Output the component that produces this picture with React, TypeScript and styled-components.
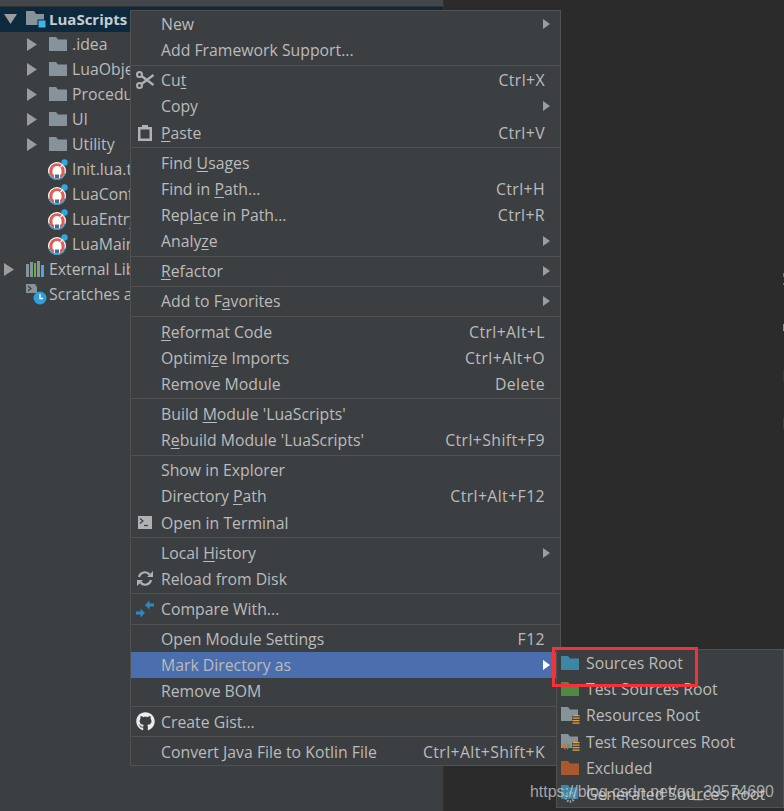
import React from "react"
import styled, { createGlobalStyle } from "styled-components"
import { FaGithub } from "react-icons/fa"

const GlobalStyle = createGlobalStyle`
    html, body {
        margin: 0;
        padding: 0;
        background: #2b2b2b;
    }
`

const Page = styled.div`
    position: relative;
    display: flex;
    width: 784px;
    height: 811px;
    overflow: hidden;
    font-family: "Open Sans", "Noto Sans", sans-serif;
    font-size: 15.8px;
    color: #bbbbbb;
`

const ProjectPanel = styled.div`
    width: 444px;
    background: #3c3f41;
    border-right: 1px solid #323232;
    box-sizing: border-box;
`

const PanelHeader = styled.div`
    height: 6px;
    background: #43464a;
    border-bottom: 1px solid #333333;
`

const Editor = styled.div`
    flex-grow: 1;
    background: #2b2b2b;
`

const TreeRow = styled.div<{ $indent: number; $selected?: boolean }>`
    display: flex;
    align-items: center;
    height: ${(p) => (p.$selected ? 24.5 : 25.05)}px;
    padding-left: ${(p) => p.$indent}px;
    white-space: nowrap;
    background: ${(p) => (p.$selected ? "#0d293e" : "transparent")};
    font-weight: ${(p) => (p.$selected ? 700 : 400)};
    font-size: ${(p) => (p.$selected ? 15 : 15.8)}px;
    color: ${(p) => (p.$selected ? "#c6ccd0" : "#bbbbbb")};
`

const Twisty = styled.span`
    display: flex;
    width: 22px;
    flex-shrink: 0;
`

const TreeIcon = styled.span<{ $width?: number }>`
    display: flex;
    width: ${(p) => p.$width ?? 23}px;
    flex-shrink: 0;
`

const Menu = styled.div<{ $left: number; $top: number; $width: number }>`
    position: absolute;
    left: ${(p) => p.$left}px;
    top: ${(p) => p.$top}px;
    width: ${(p) => p.$width}px;
    box-sizing: border-box;
    background: #3c3f41;
    border: 1px solid #515151;
`

const Row = styled.div<{ $active?: boolean }>`
    display: flex;
    align-items: center;
    height: 26.15px;
    padding: 0 10px 0 4px;
    white-space: nowrap;
    background: ${(p) => (p.$active ? "#4b6eaf" : "transparent")};
`

const RowIcon = styled.span`
    display: flex;
    justify-content: center;
    width: 20px;
    margin-right: 6px;
    flex-shrink: 0;
`

const Label = styled.span`
    flex-grow: 1;
    u {
        text-underline-offset: 2px;
    }
`

const Shortcut = styled.span`
    margin-right: 5px;
    letter-spacing: 0.4px;
`

const Arrow = styled.span<{ $active?: boolean }>`
    width: 0;
    height: 0;
    border-left: 7px solid ${(p) => (p.$active ? "#ffffff" : "#9a9c9e")};
    border-top: 5px solid transparent;
    border-bottom: 5px solid transparent;
`

const Separator = styled.div`
    height: 4px;
    display: flex;
    align-items: center;
    &::before {
        content: "";
        flex-grow: 1;
        height: 1px;
        background: #515151;
    }
`

const SubRow = styled.div`
    display: flex;
    align-items: center;
    height: 26.2px;
    padding-left: 4px;
    white-space: nowrap;
`

const SubIcon = styled.span`
    display: flex;
    width: 25px;
    flex-shrink: 0;
`

const RedBox = styled.div`
    position: absolute;
    left: 552px;
    top: 647px;
    width: 146px;
    height: 40px;
    box-sizing: border-box;
    border: 3px solid #f53238;
`

const Watermark = styled.div`
    position: absolute;
    left: 530px;
    top: 781px;
    font-family: "Liberation Sans", Arial, sans-serif;
    font-size: 15.9px;
    line-height: 22px;
    white-space: nowrap;
    color: rgba(214, 214, 214, 0.72);
`

// clipped editor text peeking in at the right window edge
const EdgeMark = styled.div<{ $top: number; $height: number; $color: string }>`
    position: absolute;
    right: 0;
    top: ${(p) => p.$top}px;
    width: 1px;
    height: ${(p) => p.$height}px;
    background: ${(p) => p.$color};
`

const Folder = ({ color = "#87939a" }: { color?: string }) => (
    <svg width="18" height="14" viewBox="0 0 18 14">
        <path d="M0 0h7l2 2.5h9V14H0z" fill={color} />
    </svg>
)

const RootFolder = () => (
    <svg width="20" height="18" viewBox="0 0 20 18">
        <path d="M0 1h8l2 3h8v11H0z" fill="#87939a" />
        <rect x="12" y="10" width="8" height="8" fill="#3fb4e8" stroke="#0d293e" strokeWidth="1" />
    </svg>
)

const LuaIcon = () => (
    <svg width="21" height="21" viewBox="0 0 21 21">
        <circle cx="9" cy="12" r="9" fill="#fff" />
        <circle cx="9" cy="12" r="7.8" fill="#e05c55" />
        <path d="M1 14.5a8.4 8.4 0 0 0 16 0" fill="none" stroke="#2b8fc6" strokeWidth="1.2" />
        <path d="M4.5 11.5a4.5 4.5 0 0 1 9 0v3L12 16v3H6v-3l-1.5-1.5z" fill="#fff" />
        <path d="M7 19v-3.5h4V19" fill="#3c6f96" />
        <circle cx="16.5" cy="3.5" r="3.2" fill="#2fa8dc" />
        <path d="M15 5.5l-2.5 2.5" stroke="#fff" strokeWidth="1.2" />
    </svg>
)

const Libraries = () => (
    <svg width="18" height="16" viewBox="0 0 18 16">
        <rect x="0" y="3" width="3" height="13" fill="#87939a" />
        <rect x="4" y="1" width="3" height="15" fill="#87939a" />
        <rect x="8" y="2" width="2" height="14" fill="#62b543" />
        <rect x="11" y="0" width="3" height="16" fill="#87939a" />
        <rect x="15" y="4" width="3" height="12" fill="#4ea6d8" />
    </svg>
)

const Scratches = () => (
    <svg width="21" height="21" viewBox="0 0 21 21">
        <path d="M0 0h9l2 3v6H0z" fill="#87939a" />
        <path d="M2 2l3 2.5L2 7" fill="none" stroke="#3c3f41" strokeWidth="1.2" />
        <circle cx="14" cy="14" r="6.5" fill="#2d9fdc" />
        <path d="M14 10v4.5h3" fill="none" stroke="#fff" strokeWidth="1.3" />
    </svg>
)

const ScissorsIcon = () => (
    <svg width="19" height="18" viewBox="0 0 19 18">
        <circle cx="3.5" cy="3.5" r="2.5" fill="none" stroke="#afb1b3" strokeWidth="2" />
        <circle cx="3.5" cy="14.5" r="2.5" fill="none" stroke="#afb1b3" strokeWidth="2" />
        <path d="M5.5 5l12 9M5.5 13L17.5 4" stroke="#afb1b3" strokeWidth="2.2" />
    </svg>
)

const ClipboardIcon = () => (
    <svg width="14" height="16" viewBox="0 0 14 16">
        <path d="M0 2h4V0h6v2h4v14H0z" fill="#afb1b3" />
        <rect x="2.5" y="4.5" width="9" height="9" fill="#3c3f41" />
    </svg>
)

const TerminalIcon = () => (
    <svg width="14" height="13" viewBox="0 0 14 13">
        <rect width="14" height="13" fill="#afb1b3" />
        <path d="M2 2.5l3 2.5-3 2.5" fill="none" stroke="#3c3f41" strokeWidth="1.2" />
        <path d="M6 9.5h4" stroke="#3c3f41" strokeWidth="1.2" />
    </svg>
)

const ReloadIcon = () => (
    <svg width="16" height="15" viewBox="0 0 16 15">
        <path d="M2 6a6 6 0 0 1 10.5-2.5" fill="none" stroke="#afb1b3" strokeWidth="2.2" />
        <path d="M14 9a6 6 0 0 1-10.5 2.5" fill="none" stroke="#afb1b3" strokeWidth="2.2" />
        <path d="M10 6h6V0zM6 9H0v6z" fill="#afb1b3" />
    </svg>
)

const CompareIcon = () => (
    <svg width="18" height="18" viewBox="0 0 18 18">
        <path d="M0 11.5h4.5V8.5L9 13l-4.5 4.5v-3H0z" fill="#2f87bd" />
        <path d="M18 6.5h-4.5v3L9 5l4.5-4.5v3H18z" fill="#2f87bd" />
    </svg>
)

const ResourceLines = ({ x, y }: { x: number; y: number }) => (
    <path
        d={`M${x} ${y}h7v1.2h-7zM${x} ${y + 2.5}h7v1.2h-7zM${x} ${y + 5}h7v1.2h-7zM${x} ${y + 7.5}h7v1.2h-7z`}
        fill="#e0a43c"
    />
)

const ResourcesIcon = ({ test }: { test?: boolean }) => (
    <svg width="19" height="18" viewBox="0 0 19 18">
        <path d="M0 1h7l2 2.5h8V9h-6v6H0z" fill="#87939a" />
        <ResourceLines x={11.5} y={9} />
        {test && <path d="M1 13l3.5-3.5V17z" fill="#e8622a" />}
        {test && <path d="M9.5 13L6 9.5V17z" fill="#4fa83f" />}
    </svg>
)

const GeneratedIcon = () => (
    <svg width="19" height="18" viewBox="0 0 19 18">
        <path d="M0 0h7l2 2.5h8V14H0z" fill="#3b87a5" />
        <circle cx="9" cy="12" r="4.5" fill="none" stroke="#9aa0a4" strokeWidth="2.4" strokeDasharray="1.6 1.2" />
    </svg>
)

type Item =
    | "sep"
    | { label: string; shortcut?: string; submenu?: boolean; icon?: React.ReactNode; active?: boolean }

// "_" marks the mnemonic letter
const items: Item[] = [
    { label: "New", submenu: true },
    { label: "Add Framework Support..." },
    "sep",
    { label: "Cu_t", shortcut: "Ctrl+X", icon: <ScissorsIcon /> },
    { label: "Copy", submenu: true },
    { label: "_Paste", shortcut: "Ctrl+V", icon: <ClipboardIcon /> },
    "sep",
    { label: "Find _Usages" },
    { label: "Find in _Path...", shortcut: "Ctrl+H" },
    { label: "Repl_ace in Path...", shortcut: "Ctrl+R" },
    { label: "Analy_ze", submenu: true },
    "sep",
    { label: "_Refactor", submenu: true },
    "sep",
    { label: "Add to F_avorites", submenu: true },
    "sep",
    { label: "_Reformat Code", shortcut: "Ctrl+Alt+L" },
    { label: "Optimi_ze Imports", shortcut: "Ctrl+Alt+O" },
    { label: "Remove Module", shortcut: "Delete" },
    "sep",
    { label: "Build _Module 'LuaScripts'" },
    { label: "R_ebuild Module 'LuaScripts'", shortcut: "Ctrl+Shift+F9" },
    "sep",
    { label: "Show in Explorer" },
    { label: "Directory _Path", shortcut: "Ctrl+Alt+F12" },
    { label: "Open in Terminal", icon: <TerminalIcon /> },
    "sep",
    { label: "Local _History", submenu: true },
    { label: "Reload from Disk", icon: <ReloadIcon /> },
    "sep",
    { label: "Compare With...", icon: <CompareIcon /> },
    "sep",
    { label: "Open Module Settings", shortcut: "F12" },
    { label: "Mark Directory as", submenu: true, active: true },
    { label: "Remove BOM" },
    "sep",
    { label: "Create Gist...", icon: <FaGithub size={19} color="#ececec" /> },
    "sep",
    { label: "Convert Java File to Kotlin File", shortcut: "Ctrl+Alt+Shift+K" },
]

const subItems = [
    { label: "Sources Root", icon: <Folder color="#3b87a5" /> },
    { label: "Test Sources Root", icon: <Folder color="#4f8a45" /> },
    { label: "Resources Root", icon: <ResourcesIcon /> },
    { label: "Test Resources Root", icon: <ResourcesIcon test /> },
    { label: "Excluded", icon: <Folder color="#a9572c" /> },
    { label: "Generated Sources Root", icon: <GeneratedIcon /> },
]

const edgeMarks = [
    { top: 273, height: 4, color: "#5b7a90" },
    { top: 283, height: 2, color: "#5b7a90" },
    { top: 324, height: 7, color: "#7d9ab0" },
    { top: 370, height: 12, color: "#2f3550" },
    { top: 418, height: 11, color: "#2f3f60" },
]

const folders = [".idea", "LuaObjects", "Procedure", "UI", "Utility"]
const luaFiles = ["Init.lua.txt", "LuaConfig.lua.txt", "LuaEntry.lua.txt", "LuaMain.lua.txt"]

const renderLabel = (label: string) => {
    const at = label.indexOf("_")
    if (at < 0) return label
    return (
        <>
            {label.slice(0, at)}
            <u>{label[at + 1]}</u>
            {label.slice(at + 2)}
        </>
    )
}

const RightTriangle = () => (
    <svg width="10" height="13" viewBox="0 0 10 13">
        <path d="M0 0l10 6.5L0 13z" fill="#9a9c9e" />
    </svg>
)

const DownTriangle = () => (
    <svg width="13" height="10" viewBox="0 0 13 10">
        <path d="M0 0h13L6.5 10z" fill="#9a9c9e" />
    </svg>
)

export default function App() {
    return (
        <Page>
            <GlobalStyle />
            <ProjectPanel>
                <PanelHeader />
                <TreeRow $indent={4} $selected>
                    <Twisty><DownTriangle /></Twisty>
                    <TreeIcon><RootFolder /></TreeIcon>
                    LuaScripts
                </TreeRow>
                {folders.map((name) => (
                    <TreeRow key={name} $indent={27}>
                        <Twisty><RightTriangle /></Twisty>
                        <TreeIcon><Folder /></TreeIcon>
                        {name}
                    </TreeRow>
                ))}
                {luaFiles.map((name) => (
                    <TreeRow key={name} $indent={48}>
                        <TreeIcon $width={24}><LuaIcon /></TreeIcon>
                        {name}
                    </TreeRow>
                ))}
                <TreeRow $indent={4}>
                    <Twisty><RightTriangle /></Twisty>
                    <TreeIcon><Libraries /></TreeIcon>
                    External Libraries
                </TreeRow>
                <TreeRow $indent={26}>
                    <TreeIcon><Scratches /></TreeIcon>
                    Scratches and Consoles
                </TreeRow>
            </ProjectPanel>
            <Editor />

            {edgeMarks.map((m) => (
                <EdgeMark key={m.top} $top={m.top} $height={m.height} $color={m.color} />
            ))}

            <Menu $left={130} $top={10} $width={431}>
                {items.map((item, i) =>
                    item === "sep" ? (
                        <Separator key={i} />
                    ) : (
                        <Row key={item.label} $active={item.active}>
                            <RowIcon>{item.icon}</RowIcon>
                            <Label>{renderLabel(item.label)}</Label>
                            {item.shortcut && <Shortcut>{item.shortcut}</Shortcut>}
                            {item.submenu && <Arrow $active={item.active} />}
                        </Row>
                    )
                )}
            </Menu>

            <Menu $left={556} $top={649} $width={228}>
                {subItems.map((item) => (
                    <SubRow key={item.label}>
                        <SubIcon>{item.icon}</SubIcon>
                        {item.label}
                    </SubRow>
                ))}
            </Menu>

            <RedBox />
            <Watermark>https://blog.csdn.net/qq_39574690</Watermark>
        </Page>
    )
}
